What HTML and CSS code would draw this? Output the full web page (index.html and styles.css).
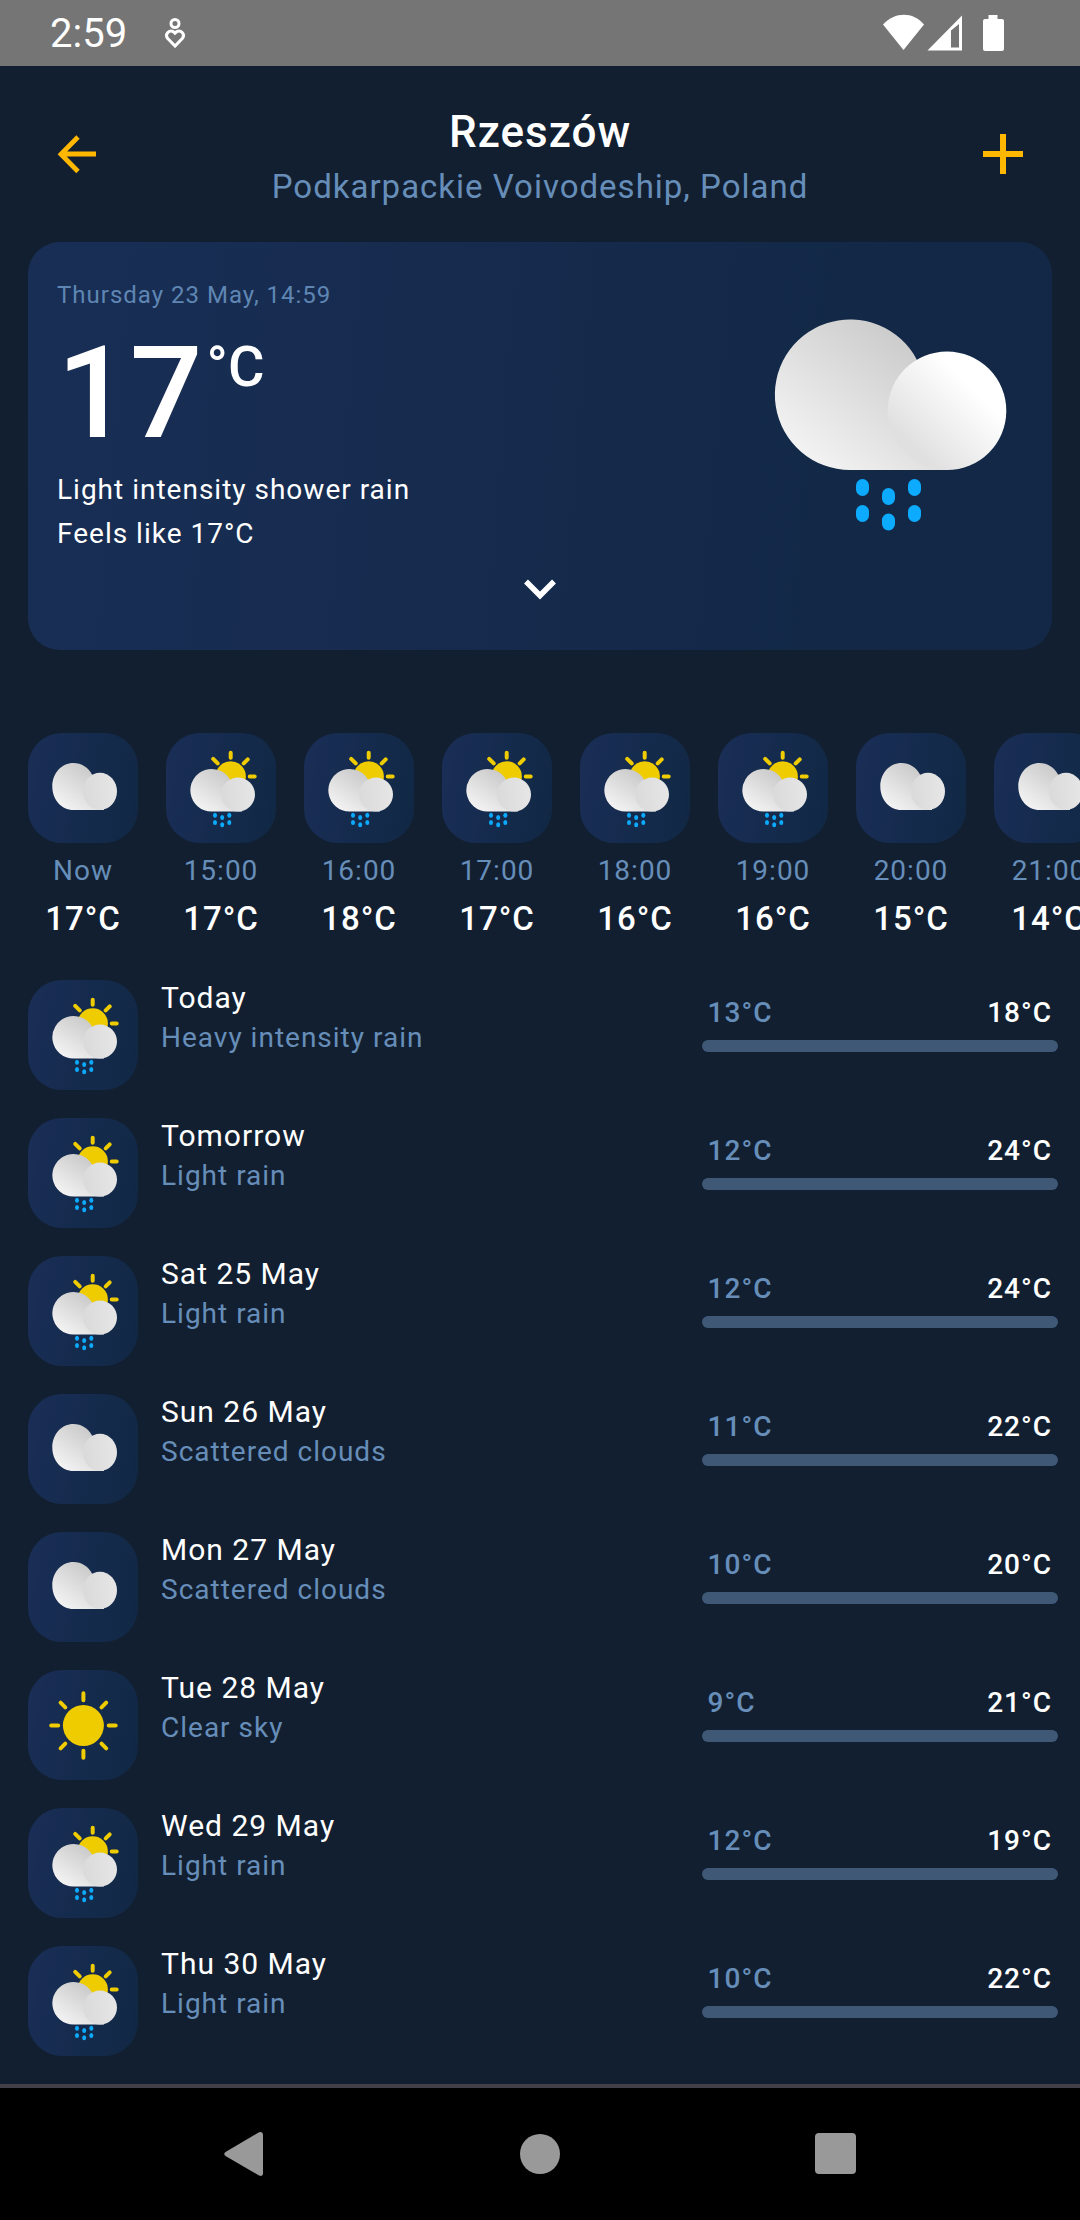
FILE: index.html
```html
<!DOCTYPE html>
<html lang="en">
<head>
<meta charset="utf-8">
<meta name="viewport" content="width=device-width, initial-scale=1">
<title>Weather in Rzeszów</title>
<link rel="stylesheet" href="styles.css">
</head>
<body>
<svg class="defs" aria-hidden="true">
  <defs>
    <linearGradient id="back-puff" x1="0.8" y1="0.2" x2="0.15" y2="0.9">
      <stop offset="0" stop-color="#cccccc"/><stop offset="1" stop-color="#f3f3f3"/>
    </linearGradient>
    <linearGradient id="front-puff" x1="0.7" y1="0.3" x2="0.2" y2="0.8">
      <stop offset="0" stop-color="#ffffff"/><stop offset="1" stop-color="#e0e0e0"/>
    </linearGradient>
    <linearGradient id="small-back" x1="0.75" y1="0.15" x2="0.15" y2="0.9">
      <stop offset="0" stop-color="#cacaca"/><stop offset="1" stop-color="#f3f3f3"/>
    </linearGradient>
    <linearGradient id="small-front" x1="0" y1="0.6" x2="1" y2="0.5">
      <stop offset="0" stop-color="#dadada"/><stop offset="1" stop-color="#e6e6e6"/>
    </linearGradient>
  </defs>
  <symbol id="cloud" viewBox="0 0 110 110">
    <path fill="url(#small-back)" d="M72 77H45.5C33.500 77 24.300 66.600 24.300 53.500S33.500 30 45.500 30C53.500 30 60.500 34.500 64 41.500L76 60V77z"/>
    <ellipse cx="72" cy="58.400" rx="17" ry="18.600" fill="url(#small-front)"/>
  </symbol>
  <symbol id="sun-rain" viewBox="0 0 110 110">
    <circle cx="64.700" cy="43.400" r="15.200" fill="#efcc00"/>
    <path stroke="#efcc00" stroke-width="4" stroke-linecap="round" d="M64.700 19.700v5M83.700 43.500h5M77.700 30.400l4-4M51.700 30.400l-4.500-4.500"/>
    <path fill="url(#small-back)" d="M72 78.600H45.600a21.300 21.300 0 1 1 19-31L76 62V78.600z"/>
    <circle cx="72" cy="61.600" r="17" fill="url(#small-front)"/>
    <g fill="#0cabff">
      <ellipse cx="49" cy="82.200" rx="2" ry="2.500"/><ellipse cx="49" cy="89.400" rx="2" ry="2.500"/>
      <ellipse cx="56.200" cy="84.600" rx="2" ry="2.500"/><ellipse cx="56.200" cy="91.800" rx="2" ry="2.500"/>
      <ellipse cx="63.300" cy="82.200" rx="2" ry="2.500"/><ellipse cx="63.300" cy="89.400" rx="2" ry="2.500"/>
    </g>
  </symbol>
  <symbol id="sun" viewBox="0 0 110 110">
    <circle cx="55.400" cy="55.500" r="20.500" fill="#efcc00"/>
    <path stroke="#efcc00" stroke-width="4" stroke-linecap="round" d="M55.400 23.200v7M55.400 80.800v7M23.200 55.500h7M80.700 55.500h7M73.500 37.400l4.700-4.700M37.300 37.400l-4.700-4.700M73.500 73.600l4.700 4.700M37.300 73.600l-4.700 4.700"/>
  </symbol>
</svg>

<div class="screen">
  <div class="status-bar">
    <span class="clock">2:59</span>
    <svg class="wellbeing" width="24" height="32" viewBox="0 0 24 32" fill="none" stroke="#fff" stroke-width="3" aria-hidden="true">
      <circle cx="12" cy="6.500" r="4"/>
      <path d="M12 29L4.500 21.300a4.500 4.500 0 0 1 6-6.500L12 16.200l1.500-1.400a4.500 4.500 0 0 1 6 6.500z"/>
    </svg>
    <svg class="signals" width="122" height="38" viewBox="0 0 122 38" fill="#fff" aria-hidden="true">
      <path d="M0 10.500C12-2.500 30-2.500 41 10.500L20.500 36z"/>
      <path fill-rule="evenodd" d="M44.500 36.500L79 1.500v35zM68 16.500v17h8V10z"/>
      <path d="M105.500 1h9v4h4.500a2 2 0 0 1 2 2v28a2 2 0 0 1-2 2h-17a2 2 0 0 1-2-2V7a2 2 0 0 1 2-2h3.500z"/>
    </svg>
  </div>

  <header class="top-bar">
    <button class="icon-button" type="button" aria-label="Back">
      <svg width="40" height="40" viewBox="0 0 40 40" fill="none" stroke="#ffb700" stroke-width="4.800"><path d="M39 20H5M21 3L4 20.200 21 37.500"/></svg>
    </button>
    <div class="place">
      <h1 class="city">Rzeszów</h1>
      <p class="region">Podkarpackie Voivodeship, Poland</p>
    </div>
    <button class="icon-button" type="button" aria-label="Add location">
      <svg width="40" height="40" viewBox="0 0 40 40" fill="none" stroke="#ffb700" stroke-width="6"><path d="M0 20h40M20 0v40"/></svg>
    </button>
  </header>

  <main class="content">
    <section class="current" aria-label="Current weather">
      <div class="current-row">
        <div>
          <p class="date">Thursday 23 May, 14:59</p>
          <p class="reading"><span class="degrees">17</span><span class="unit">°C</span></p>
          <p class="summary">Light intensity shower rain</p>
          <p class="summary">Feels like 17°C</p>
        </div>
        <svg width="260" height="240" viewBox="0 0 260 240" role="img" aria-label="Shower rain">
          <path fill="url(#back-puff)" d="M184 172H87a75.300 75.300 0 1 1 67-110L190 120z"/>
          <circle cx="184" cy="112.700" r="59.300" fill="url(#front-puff)"/>
          <g fill="#0cabff">
            <rect x="93" y="181" width="13" height="17" rx="6.500"/><rect x="93" y="207" width="13" height="17" rx="6.500"/>
            <rect x="119" y="190" width="13" height="17" rx="6.500"/><rect x="119" y="215.500" width="13" height="17" rx="6.500"/>
            <rect x="145" y="181" width="13" height="17" rx="6.500"/><rect x="145" y="207" width="13" height="17" rx="6.500"/>
          </g>
        </svg>
      </div>
      <button class="expand" type="button" aria-label="Show details">
        <svg width="36" height="24" viewBox="0 0 36 24" fill="none" stroke="#fff" stroke-width="5.500"><path d="M4 3.500l14 14 14-14"/></svg>
      </button>
    </section>

    <ul class="hourly">
      <li class="hour"><svg class="tile"><use href="#cloud"/></svg><span class="time">Now</span><span class="hour-temp">17°C</span></li>
      <li class="hour"><svg class="tile"><use href="#sun-rain"/></svg><span class="time">15:00</span><span class="hour-temp">17°C</span></li>
      <li class="hour"><svg class="tile"><use href="#sun-rain"/></svg><span class="time">16:00</span><span class="hour-temp">18°C</span></li>
      <li class="hour"><svg class="tile"><use href="#sun-rain"/></svg><span class="time">17:00</span><span class="hour-temp">17°C</span></li>
      <li class="hour"><svg class="tile"><use href="#sun-rain"/></svg><span class="time">18:00</span><span class="hour-temp">16°C</span></li>
      <li class="hour"><svg class="tile"><use href="#sun-rain"/></svg><span class="time">19:00</span><span class="hour-temp">16°C</span></li>
      <li class="hour"><svg class="tile"><use href="#cloud"/></svg><span class="time">20:00</span><span class="hour-temp">15°C</span></li>
      <li class="hour"><svg class="tile"><use href="#cloud"/></svg><span class="time">21:00</span><span class="hour-temp">14°C</span></li>
    </ul>

    <ul class="daily">
      <li class="day"><svg class="tile"><use href="#sun-rain"/></svg><div class="day-text"><h2 class="day-name">Today</h2><p class="day-note">Heavy intensity rain</p></div><div class="range"><div class="temps"><span class="low">13°C</span><span>18°C</span></div><div class="bar"></div></div></li>
      <li class="day"><svg class="tile"><use href="#sun-rain"/></svg><div class="day-text"><h2 class="day-name">Tomorrow</h2><p class="day-note">Light rain</p></div><div class="range"><div class="temps"><span class="low">12°C</span><span>24°C</span></div><div class="bar"></div></div></li>
      <li class="day"><svg class="tile"><use href="#sun-rain"/></svg><div class="day-text"><h2 class="day-name">Sat 25 May</h2><p class="day-note">Light rain</p></div><div class="range"><div class="temps"><span class="low">12°C</span><span>24°C</span></div><div class="bar"></div></div></li>
      <li class="day"><svg class="tile"><use href="#cloud"/></svg><div class="day-text"><h2 class="day-name">Sun 26 May</h2><p class="day-note">Scattered clouds</p></div><div class="range"><div class="temps"><span class="low">11°C</span><span>22°C</span></div><div class="bar"></div></div></li>
      <li class="day"><svg class="tile"><use href="#cloud"/></svg><div class="day-text"><h2 class="day-name">Mon 27 May</h2><p class="day-note">Scattered clouds</p></div><div class="range"><div class="temps"><span class="low">10°C</span><span>20°C</span></div><div class="bar"></div></div></li>
      <li class="day"><svg class="tile"><use href="#sun"/></svg><div class="day-text"><h2 class="day-name">Tue 28 May</h2><p class="day-note">Clear sky</p></div><div class="range"><div class="temps"><span class="low">9°C</span><span>21°C</span></div><div class="bar"></div></div></li>
      <li class="day"><svg class="tile"><use href="#sun-rain"/></svg><div class="day-text"><h2 class="day-name">Wed 29 May</h2><p class="day-note">Light rain</p></div><div class="range"><div class="temps"><span class="low">12°C</span><span>19°C</span></div><div class="bar"></div></div></li>
      <li class="day"><svg class="tile"><use href="#sun-rain"/></svg><div class="day-text"><h2 class="day-name">Thu 30 May</h2><p class="day-note">Light rain</p></div><div class="range"><div class="temps"><span class="low">10°C</span><span>22°C</span></div><div class="bar"></div></div></li>
    </ul>
  </main>

  <nav class="system-nav" aria-label="System">
    <button class="nav-button" type="button" aria-label="Back"><svg width="40" height="46" viewBox="0 0 40 46" fill="#999"><path d="M1.500 21L35 1.200Q39 0 39 3.500V42.500Q39 46 35 44.500L1.500 25Q-1 23 1.500 21z"/></svg></button>
    <button class="nav-button" type="button" aria-label="Home"><svg width="42" height="42" viewBox="0 0 42 42" fill="#999"><circle cx="21" cy="21" r="20"/></svg></button>
    <button class="nav-button" type="button" aria-label="Recent apps"><svg width="42" height="42" viewBox="0 0 42 42" fill="#999"><rect width="41" height="41" rx="4"/></svg></button>
  </nav>
</div>
</body>
</html>
```
FILE: styles.css
```css
* {
  box-sizing: border-box;
}

body {
  margin: 0;
  background: #121f31;
  color: #fff;
  font-family: Roboto, "Noto Sans", sans-serif;
  font-size: 28px;
  letter-spacing: 1px;
}

h1, h2, p, ul {
  margin: 0;
  padding: 0;
  font-weight: 400;
  list-style: none;
}

button {
  display: flex;
  align-items: center;
  justify-content: center;
  padding: 0;
  border: 0;
  background: none;
  cursor: pointer;
}

.defs {
  position: absolute;
  width: 0;
  height: 0;
}

.screen {
  display: flex;
  flex-direction: column;
  min-height: 100vh;
}

/* Status bar */
.status-bar {
  display: flex;
  align-items: center;
  height: 66px;
  padding: 0 75px 0 50px;
  background: #757575;
}

.clock {
  font-size: 40px;
  letter-spacing: 0;
}

.wellbeing {
  margin-left: 36px;
}

.signals {
  margin-left: auto;
}

/* Header */
.top-bar {
  display: flex;
  align-items: flex-start;
  justify-content: space-between;
  padding: 38px 28px 33px;
}

.icon-button {
  width: 98px;
  height: 100px;
}

.place {
  text-align: center;
}

.city {
  font-size: 44px;
  font-weight: 500;
  line-height: 56px;
}

.region {
  margin-top: 5px;
  color: #668eb9;
  font-size: 33px;
  line-height: 44px;
}

.content {
  flex: 1;
  padding-bottom: 28px;
}

/* Current weather */
.current {
  display: flex;
  flex-direction: column;
  align-items: center;
  margin: 0 28px;
  padding: 37px 29px 36px;
  border-radius: 32px;
  background: linear-gradient(95deg, #192e55, #122846 85%);
}

.current-row {
  display: flex;
  align-items: center;
  justify-content: space-between;
  width: 100%;
}

.date {
  color: #5f86b3;
  font-size: 24px;
  line-height: 32px;
}

.reading {
  display: flex;
  align-items: flex-start;
  margin: 26px 0 19px;
  font-weight: 500;
  letter-spacing: 0;
}

.degrees {
  font-size: 128px;
  line-height: 112px;
}

.unit {
  margin-left: 4px;
  font-size: 56px;
  line-height: 60px;
}

.summary {
  line-height: 44px;
}

.expand {
  width: 96px;
  height: 48px;
  margin-top: 10px;
}

/* Weather tile */
.tile {
  display: block;
  flex: none;
  width: 110px;
  height: 110px;
  border-radius: 34px;
  background: linear-gradient(100deg, #1a2e57, #102844);
}

/* Hourly forecast */
.hourly {
  display: flex;
  gap: 28px;
  margin: 83px 0 41px;
  padding: 0 28px;
  overflow-x: auto;
  scrollbar-width: none;
}

.hour {
  display: flex;
  flex: none;
  flex-direction: column;
  align-items: center;
}

.time {
  margin-top: 10px;
  color: #668eb9;
  line-height: 36px;
}

.hour-temp {
  margin-top: 10px;
  font-size: 33px;
  font-weight: 500;
  line-height: 40px;
}

/* Daily forecast */
.daily {
  display: flex;
  flex-direction: column;
  gap: 28px;
  padding: 0 22px 0 28px;
}

.day {
  display: flex;
  gap: 23px;
}

.day-text {
  flex: 1;
}

.day-name {
  font-size: 30px;
  line-height: 36px;
}

.day-note {
  margin-top: 2px;
  color: #668eb9;
  line-height: 40px;
}

.range {
  width: 33vw;
  padding-top: 13px;
}

.temps {
  display: flex;
  justify-content: space-between;
  padding: 0 6px;
  font-weight: 500;
  line-height: 40px;
}

.low {
  color: #668eb9;
}

.bar {
  height: 12px;
  margin-top: 7px;
  border-radius: 6px;
  background: #3f5875;
}

/* System navigation */
.system-nav {
  display: grid;
  grid-template-columns: repeat(3, 1fr);
  padding: 0 96px;
  border-top: 4px solid #433f48;
  background: #000;
}

.nav-button {
  height: 132px;
}
```
